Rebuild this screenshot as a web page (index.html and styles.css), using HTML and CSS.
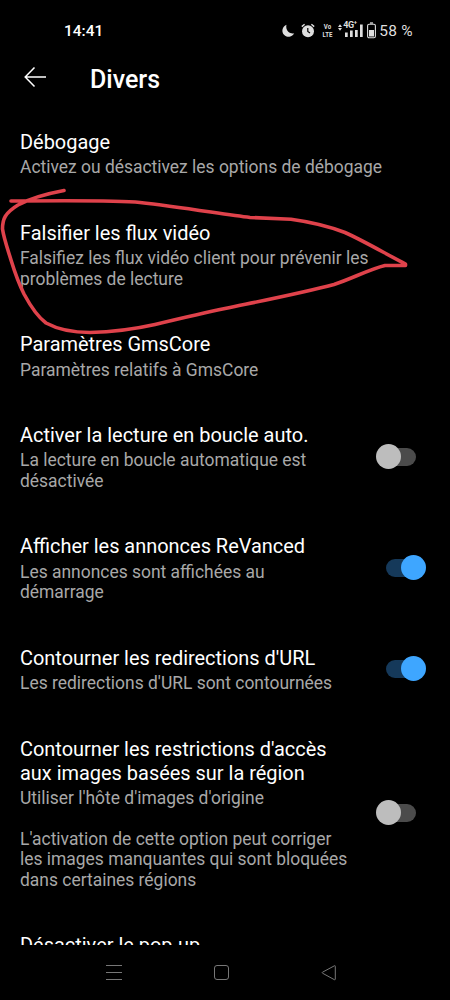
FILE: index.html
```html
<!DOCTYPE html>
<html lang="fr">
<head>
<meta charset="utf-8">
<title>Divers</title>
<link rel="stylesheet" href="styles.css">
</head>
<body>
<div class="screen">
  <div class="statusbar">
    <span class="clock">14:41</span>
    <div class="status-icons">
      <svg class="moon" width="14" height="14" viewBox="0 0 14 14"><path d="M5.500 .8A6.200 6.200 0 1 0 13.200 9.300C9.500 10.500 4 7 5.500 .8Z" fill="#dedede"/></svg>
      <svg class="alarm" width="14" height="15" viewBox="0 0 14 15"><circle cx="7" cy="8.200" r="6" fill="#dedede"/><path d="M.8 3.600 3.600 1.200M13.200 3.600 10.400 1.200" stroke="#dedede" stroke-width="1.400"/><path d="M6.800 5v3.500l2.200 1.600" fill="none" stroke="#000" stroke-width="1.200"/></svg>
      <span class="volte"><span>Vo</span><span>LTE</span></span>
      <div class="signal">
        <svg width="25" height="15" viewBox="0 0 25 15" fill="#dedede"><path d="M0 4 2 1.300 4 4zM0 5h4L2 7.700z"/><path d="M7 9.500h2.700V14H7zM12 7.500h2.700V14H12zM17 5h2.700v9H17zM22 1.500h2.700V14H22z"/></svg>
        <span class="network">4G<sup>+</sup></span>
      </div>
      <svg class="battery" width="9" height="17" viewBox="0 0 9 17"><path d="M3 1h3" stroke="#dedede" stroke-width="1.300"/><rect x=".6" y="2.200" width="7.800" height="13.600" rx="1.500" fill="none" stroke="#dedede" stroke-width="1.100"/><path d="M2 8h5v6.500H2z" fill="#dedede"/></svg>
      <span class="percent">58 %</span>
    </div>
  </div>
  <header class="header">
    <svg width="23" height="22" viewBox="0 0 23 22"><path d="M22 11H1.500M10.500 1.500 1.200 11l9.300 9.500" fill="none" stroke="#fff" stroke-width="1.500"/></svg>
    <h1>Divers</h1>
  </header>
  <main class="list">
    <section class="item"><div class="copy"><h2>Débogage</h2><p>Activez ou désactivez les options de débogage</p></div></section>
    <section class="item"><div class="copy"><h2>Falsifier les flux vidéo</h2><p>Falsifiez les flux vidéo client pour prévenir les<br>problèmes de lecture</p></div></section>
    <section class="item"><div class="copy"><h2>Paramètres GmsCore</h2><p>Paramètres relatifs à GmsCore</p></div></section>
    <section class="item"><div class="copy"><h2>Activer la lecture en boucle auto.</h2><p>La lecture en boucle automatique est<br>désactivée</p></div><span class="switch"></span></section>
    <section class="item"><div class="copy"><h2>Afficher les annonces ReVanced</h2><p>Les annonces sont affichées au<br>démarrage</p></div><span class="switch on"></span></section>
    <section class="item"><div class="copy"><h2>Contourner les redirections d'URL</h2><p>Les redirections d'URL sont contournées</p></div><span class="switch on"></span></section>
    <section class="item"><div class="copy"><h2>Contourner les restrictions d'accès<br>aux images basées sur la région</h2><p>Utiliser l'hôte d'images d'origine<br><br>L'activation de cette option peut corriger<br>les images manquantes qui sont bloquées<br>dans certaines régions</p></div><span class="switch"></span></section>
    <section class="item"><div class="copy"><h2>Désactiver le pop-up</h2></div></section>
  </main>
  <nav class="navbar">
    <svg width="16" height="16" viewBox="0 0 16 16"><path d="M0 .5h16M0 7.500h16M0 14.500h16"/></svg>
    <svg width="16" height="16" viewBox="0 0 16 16"><rect x=".5" y=".5" width="14" height="14" rx="2.500"/></svg>
    <svg width="16" height="16" viewBox="0 0 16 16"><path d="M13.400 .8 1.500 7.200q-.8.500 0 1L13.400 14.700q.9.400.9-.5v-12.900q0-.9-.9-.5Z"/></svg>
  </nav>
  <svg class="scribble" width="450" height="1000" viewBox="0 0 450 1000"><path d="M64 190.500C48 193.500 29 199 18 205C5 213 2.500 219 2.500 229C4 239 8 250 11 260C15 273 19 284 24 294C31 307 38 317 46 323C59 330 75 332.500 90 332.500C112 332 135 329 155 324.500C182 318 203 313 225 308.500C266 300 302 293 334 284.500C351 279 370 269 385 265.500L405.500 265.500V264C386 254 364 241 345 232.500C325 225 307 221.500 291 219.300L250 217.500C225 214.500 180 207 140 202.500C117 200 73 200.500 11 201"/></svg>
</div>
</body>
</html>
```
FILE: styles.css
```css
* { box-sizing: border-box; }
body { margin: 0; background: #000; font-family: Roboto, sans-serif; }
.screen { position: relative; display: flex; flex-direction: column; width: 450px; height: 1000px; overflow: hidden; background: #000; color: #fff; }
.statusbar { display: flex; flex: none; justify-content: space-between; height: 52px; padding: 9px 37px 0 64px; }
.clock { font-size: 15.500px; font-weight: 500; line-height: 44px; height: 43px; }
.status-icons { display: flex; align-items: center; height: 43px; color: #dedede; }
.alarm { margin-left: 6px; }
.volte { display: flex; flex-direction: column; align-items: center; width: 11px; margin-left: 7px; font-size: 8px; font-weight: 700; line-height: 8px; transform: scaleX(.76); }
.signal { position: relative; display: flex; margin-left: 5px; }
.network { position: absolute; left: 5px; top: -2px; padding-right: 1px; background: #000; font-size: 9px; font-weight: 700; line-height: 9px; letter-spacing: -.4px; }
.network sup { font-size: 6px; line-height: 0; }
.battery { margin-left: 4px; }
.percent { margin-left: 3px; font-size: 15.500px; letter-spacing: .3px; white-space: nowrap; }
.header { display: flex; flex: none; align-items: center; gap: 43px; height: 56.500px; padding: 0 0 6px 24px; }
h1 { margin: 0; padding-top: 5px; font-size: 25px; font-weight: 500; line-height: 32px; }
.list { flex: 1; min-height: 0; overflow: hidden; }
.item { display: flex; align-items: center; justify-content: space-between; padding: 21.600px 24px 21.600px 20px; }
.copy { white-space: nowrap; }
h2 { margin: 0 0 3.300px; font-size: 19.960px; font-weight: 400; line-height: 24px; }
p { margin: 0; color: #a8a8a8; font-size: 17.450px; line-height: 20.400px; }
.switch { position: relative; flex: none; width: 40px; height: 25px; margin-right: 10px; top: -1px; }
.switch::before { content: ""; position: absolute; left: 10px; top: 4px; width: 30px; height: 18px; border-radius: 9px; background: #4b4b4b; }
.switch::after { content: ""; position: absolute; left: 0; top: 0; width: 25px; height: 25px; border-radius: 50%; background: #bdbdbd; }
.switch.on { margin-right: 0; }
.switch.on::before { left: 0; background: #15395a; }
.switch.on::after { left: 15px; background: #3ea6ff; }
.navbar { display: flex; flex: none; justify-content: space-between; align-items: center; height: 55px; padding: 0 113px 0 106px; background: #000; }
.navbar svg { fill: none; stroke: #777; stroke-width: 1; }
.scribble { position: absolute; left: 0; top: 0; fill: none; stroke: #df424b; stroke-width: 3.600; stroke-linecap: round; stroke-linejoin: round; }
```
